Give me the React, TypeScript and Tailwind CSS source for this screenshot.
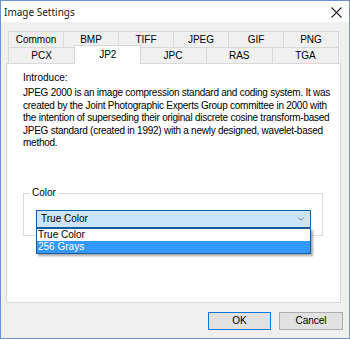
import { ChevronDown } from 'lucide-react'

const topTabs = ['Common', 'BMP', 'TIFF', 'JPEG', 'GIF', 'PNG']
const bottomTabs = ['PCX', 'JP2', 'JPC', 'RAS', 'TGA']

const introLines = [
    'JPEG 2000 is an image compression standard and coding system. It was',
    'created by the Joint Photographic Experts Group committee in 2000 with',
    'the intention of superseding their original discrete cosine transform-based',
    'JPEG standard (created in 1992) with a newly designed, wavelet-based',
    'method.',
]

export default function App() {
    return (
        <div className="w-[350px] h-[339px] border border-[#6d91d5] bg-[#f0f0f0] flex flex-col text-black font-['Liberation_Sans',Arial,sans-serif] text-[10px]">
            {/* title bar */}
            <div className="h-[21px] bg-white flex items-center justify-between pl-[3px] pr-[7px]">
                <span className="text-[10px] font-['Noto_Sans',sans-serif] text-[#1a1a1a] leading-none">Image Settings</span>
                <svg width="11" height="11" viewBox="0 0 11 11" className="mt-[1px]">
                    <path d="M0.5 0.5 L10.5 10.5 M10.5 0.5 L0.5 10.5" stroke="#222" strokeWidth="1.1" fill="none" />
                </svg>
            </div>

            {/* tabs */}
            <div className="mt-[9px] ml-[7px] w-[331px] flex flex-col">
                <div className="flex h-[16px]">
                    {topTabs.map((t, i) => (
                        <div
                            key={t}
                            className={`flex-1 flex items-center justify-center border-t border-r border-[#d9d9d9] bg-[#f0f0f0] leading-none pt-[1px] ${i === 0 ? 'border-l' : ''}`}
                        >
                            {t}
                        </div>
                    ))}
                </div>
                <div className="flex h-[16px]">
                    {bottomTabs.map((t, i) => (
                        t === 'JP2' ? (
                            <div
                                key={t}
                                className="flex-1 -mt-[2px] -mx-[1px] h-[19px] relative z-10 flex items-center justify-center border-t border-l border-r border-[#d9d9d9] bg-white leading-none pb-[1px]"
                            >
                                {t}
                            </div>
                        ) : (
                            <div
                                key={t}
                                className={`flex-1 flex items-center justify-center border-t border-r border-[#d9d9d9] bg-[#f0f0f0] leading-none pt-[1px] ${i === 0 ? 'border-l' : ''}`}
                            >
                                {t}
                            </div>
                        )
                    ))}
                </div>
            </div>

            {/* panel */}
            <div className="ml-[5px] w-[335px] h-[240px] bg-white border border-[#d9d9d9] pl-[16px] pt-[7px]">
                <div className="leading-[13px]">Introduce:</div>
                <div className="mt-[3px] leading-[12.5px] tracking-[-0.25px]">
                    {introLines.map((l) => (
                        <div key={l} className="whitespace-nowrap">{l}</div>
                    ))}
                </div>

                {/* group box */}
                <div className="relative mt-[43px] w-[300px] h-[43px] border border-[#dcdcdc] pl-[12px] pt-[16px]">
                    <span className="absolute -top-[7px] left-[6px] bg-white px-[2px] leading-[12px]">Color</span>
                    <div className="relative w-[275px]">
                        <div className="h-[18px] border border-[#0f5fa8] bg-[#cce4f7] flex items-center justify-between pl-[4px] pr-[4px]">
                            <span className="leading-none">True Color</span>
                            <ChevronDown className="w-[10px] h-[10px] text-[#666]" strokeWidth={2} />
                        </div>
                        <div className="absolute left-0 top-[18px] w-[275px] border border-[#1e5c99] bg-white shadow-[2px_2px_2px_rgba(0,0,0,0.35)] z-20">
                            <div className="h-[12px] flex items-center pl-[1px] leading-none">True Color</div>
                            <div className="h-[12px] flex items-center pl-[1px] leading-none bg-[#3399ff] text-white">256 Grays</div>
                        </div>
                    </div>
                </div>
            </div>

            {/* buttons */}
            <div className="mt-[9px] flex justify-end gap-[8px] pr-[6px]">
                <button className="w-[63px] h-[18px] border border-[#0078d7] bg-[#e1e1e1] leading-none">OK</button>
                <button className="w-[64px] h-[18px] border border-[#adadad] bg-[#e1e1e1] leading-none">Cancel</button>
            </div>
        </div>
    )
}
